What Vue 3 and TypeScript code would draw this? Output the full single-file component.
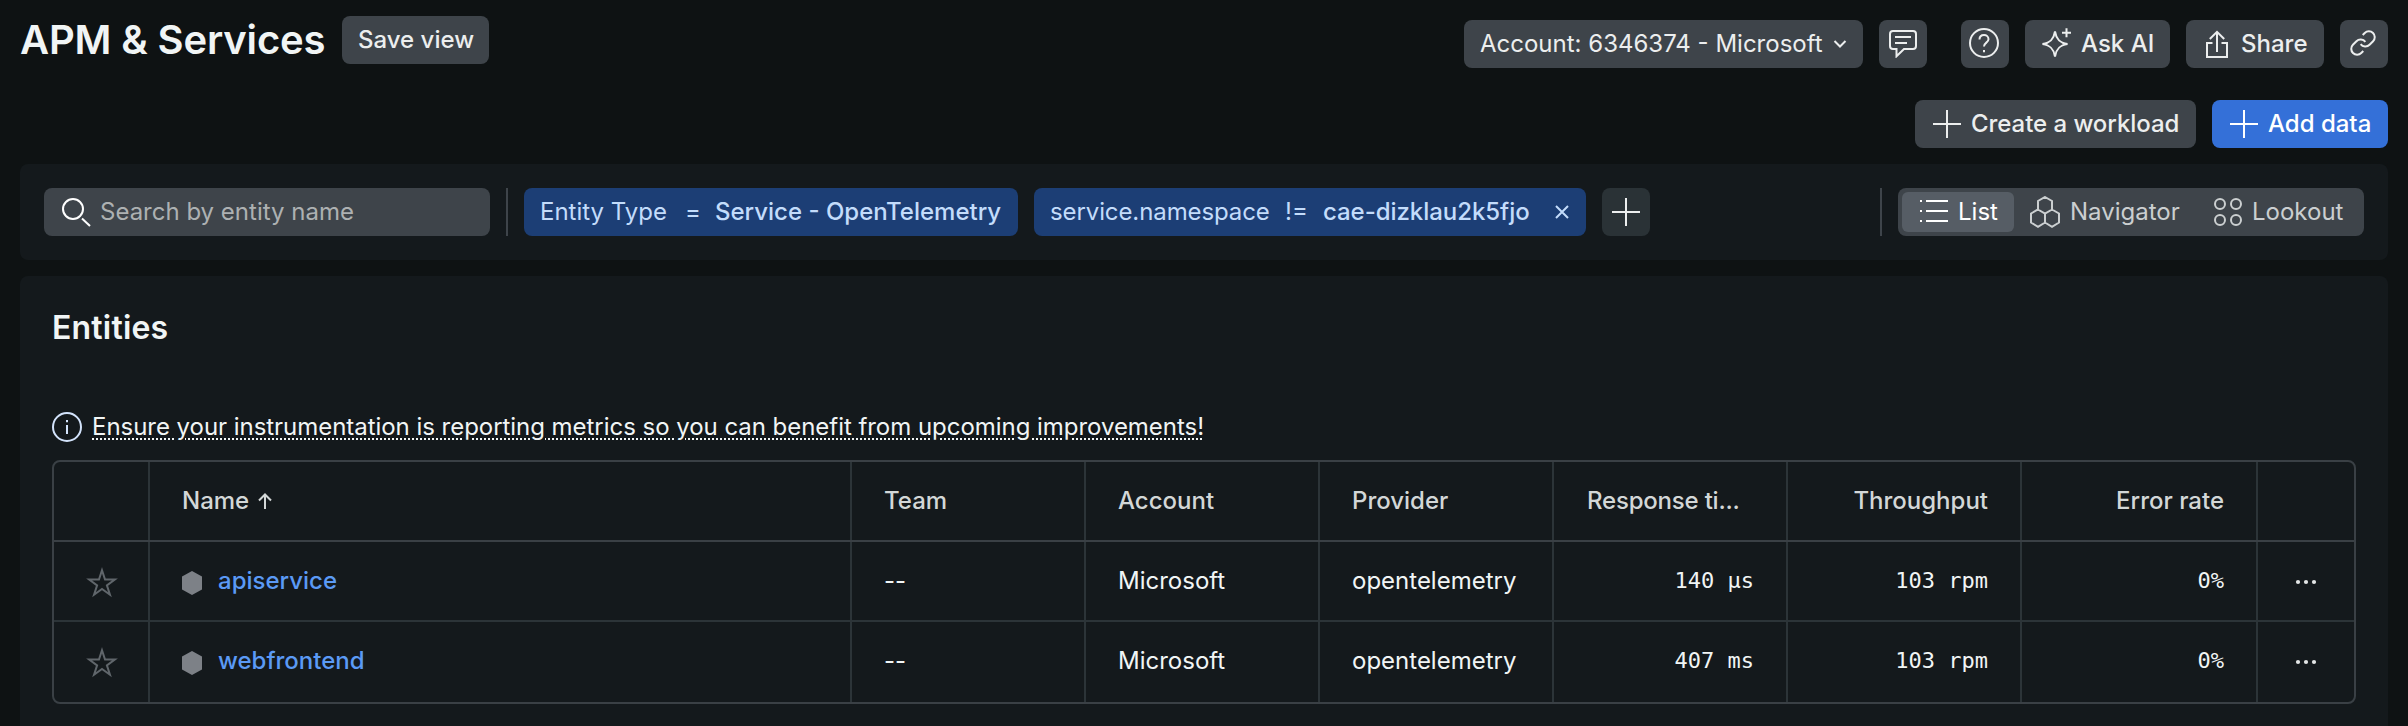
<script setup lang="ts">
interface Row {
  name: string
  team: string
  account: string
  provider: string
  response: string
  throughput: string
  errorRate: string
}

const rows: Row[] = [
  { name: 'apiservice', team: '--', account: 'Microsoft', provider: 'opentelemetry', response: '140 µs', throughput: '103 rpm', errorRate: '0%' },
  { name: 'webfrontend', team: '--', account: 'Microsoft', provider: 'opentelemetry', response: '407 ms', throughput: '103 rpm', errorRate: '0%' },
]
</script>

<template>
  <div class="page">
    <header class="top">
      <div class="heading">
        <h1>APM &amp; Services</h1>
        <button class="btn save">Save view</button>
      </div>
      <div class="actions">
        <button class="btn account">
          <span class="t-account">Account: 6346374 - Microsoft</span>
          <svg class="chev" width="14" height="10" viewBox="0 0 14 10"><path d="M1.5 2 7 7.5 12.5 2" /></svg>
        </button>
        <button class="btn square feedback">
          <svg width="28" height="28" viewBox="0 0 28 28"><path d="M7.5 19H4a3 3 0 0 1-3-3V4a3 3 0 0 1 3-3h20a3 3 0 0 1 3 3v12a3 3 0 0 1-3 3h-9l-7.5 7.3zM6 7h16M6 13h12" /></svg>
        </button>
        <button class="btn square help">
          <svg width="30" height="30" viewBox="0 0 30 30"><circle cx="15" cy="15" r="14" /><path d="M10.5 11.5C10.5 8.600 12.500 7 15 7s4.500 1.700 4.500 4.200c0 3.300-4.500 3.600-4.500 7.300M15 22v2.200" /></svg>
        </button>
        <button class="btn ask">
          <svg width="30" height="30" viewBox="0 0 30 30"><path d="M14 3.500c1.200 7.500 4.500 11.300 12.500 12.500-8 1.200-11.300 5-12.500 12.500C12.800 21 9.500 17.200 1.500 16 9.500 14.800 12.800 11 14 3.500z" /><path d="M25.500.3v9M21 4.700h9" /></svg>
          <span class="t-ask">Ask AI</span>
        </button>
        <button class="btn share">
          <svg width="22" height="28" viewBox="0 0 22 28"><path d="M6.500 13H1v14h20V13h-5.500M11 22V2M3.800 9 11 1.800 18.200 9" /></svg>
          <span class="t-share">Share</span>
        </button>
        <button class="btn square link">
          <svg width="26" height="26" viewBox="1 1 22 22"><path d="M10 13a5 5 0 0 0 7.540.54l3-3a5 5 0 0 0-7.070-7.070l-1.720 1.710M14 11a5 5 0 0 0-7.540-.54l-3 3a5 5 0 0 0 7.070 7.070l1.710-1.710" /></svg>
        </button>
      </div>
    </header>

    <div class="subactions">
      <button class="btn wide create">
        <svg width="28" height="28" viewBox="0 0 28 28"><path d="M14 0v28M0 14h28" /></svg>
        <span class="t-create">Create a workload</span>
      </button>
      <button class="btn wide primary">
        <svg width="28" height="28" viewBox="0 0 28 28"><path d="M14 0v28M0 14h28" /></svg>
        <span class="t-add">Add data</span>
      </button>
    </div>

    <section class="filters">
      <div class="search">
        <svg width="30" height="30" viewBox="0 0 30 30"><circle cx="12" cy="12" r="10" /><path d="M21 21.500l8 7.500" /></svg>
        <span>Search by entity name</span>
      </div>
      <i class="rule"></i>
      <div class="chip first"><span class="k">Entity Type</span><span class="op">=</span><b>Service - OpenTelemetry</b></div>
      <div class="chip second">
        <span class="k">service.namespace</span><span class="op">!=</span><b>cae-dizklau2k5fjo</b>
        <svg width="14" height="14" viewBox="0 0 14 14"><path d="M1 1l12 12M13 1 1 13" /></svg>
      </div>
      <button class="btn square plus"><svg width="28" height="28" viewBox="0 0 28 28"><path d="M14 0v28M0 14h28" /></svg></button>
      <i class="rule end"></i>
      <div class="modes">
        <div class="mode active">
          <svg width="28" height="22" viewBox="0 0 28 22"><path d="M0 1h2M6 1h22M0 11h2M6 11h22M0 21h2M6 21h22" /></svg>
          <span>List</span>
        </div>
        <div class="mode nav">
          <svg width="30" height="32" viewBox="0 0 30 32"><path d="M15 1l7 4v8.500l-7 4-7-4V5zM8 13.500l7 4v9l-7 4.300-7-4.300v-9zM22 13.500l7 4v9l-7 4.300-7-4.300" /></svg>
          <span>Navigator</span>
        </div>
        <div class="mode look">
          <svg width="28" height="28" viewBox="0 0 28 28"><circle cx="6" cy="6" r="5" /><circle cx="22" cy="6" r="5" /><circle cx="6" cy="22" r="5" /><circle cx="22" cy="22" r="5" /></svg>
          <span>Lookout</span>
        </div>
      </div>
    </section>

    <section class="entities">
      <h2>Entities</h2>
      <div class="notice">
        <svg width="30" height="30" viewBox="0 0 30 30"><circle cx="15" cy="15" r="14" /><path d="M15 13v9M15 8v2.200" /></svg>
        <span>Ensure your instrumentation is reporting metrics so you can benefit from upcoming improvements!</span>
      </div>
      <div class="table">
        <div class="row head">
          <div class="cell"></div>
          <div class="cell name-head">
            <span>Name</span>
            <svg width="14" height="16" viewBox="0 0 14 16"><path d="M7 16V1.500M1 7.500l6-6 6 6" /></svg>
          </div>
          <div class="cell">Team</div>
          <div class="cell">Account</div>
          <div class="cell">Provider</div>
          <div class="cell num"><span class="clip">Response ti...</span></div>
          <div class="cell num">Throughput</div>
          <div class="cell num">Error rate</div>
          <div class="cell"></div>
        </div>
        <div v-for="row in rows" :key="row.name" class="row">
          <div class="cell icon">
            <svg class="star" width="32" height="32" viewBox="0 0 32 32"><path d="M16 3.300 19.030 12.600H28.840L20.900 18.400 23.930 27.700 16 21.960 8.070 27.700 11.100 18.400 3.160 12.600H12.970z" /></svg>
          </div>
          <div class="cell">
            <svg class="hex" width="20" height="24" viewBox="0 0 20 24"><path d="M10 0l10 5.600v12.800L10 24 0 18.400V5.600z" /></svg>
            <a>{{ row.name }}</a>
          </div>
          <div class="cell">{{ row.team }}</div>
          <div class="cell">{{ row.account }}</div>
          <div class="cell">{{ row.provider }}</div>
          <div class="cell num mono">{{ row.response }}</div>
          <div class="cell num mono">{{ row.throughput }}</div>
          <div class="cell num mono">{{ row.errorRate }}</div>
          <div class="cell icon">
            <svg class="dots" width="22" height="6" viewBox="0 0 22 6"><circle cx="3" cy="3" r="2.100" /><circle cx="11" cy="3" r="2.100" /><circle cx="19" cy="3" r="2.100" /></svg>
          </div>
        </div>
      </div>
    </section>
  </div>
</template>

<style>
html,
body {
  margin: 0;
  background: #0e1213;
  overflow: hidden;
}
</style>

<style scoped>
.page {
  box-sizing: border-box;
  width: 2408px;
  height: 726px;
  padding: 16px 20px 0;
  overflow: hidden;
  background: #0e1213;
  color: #f1f5f5;
  font: 400 24px/30px Inter, "Liberation Sans", sans-serif;
  white-space: nowrap;
}
svg {
  display: block;
  flex: none;
  fill: none;
  stroke: currentColor;
  stroke-width: 2;
}
h1,
h2 {
  margin: 0;
  font-weight: 600;
}
h1 {
  width: 322px;
  font-size: 40px;
  line-height: 48px;
  letter-spacing: -0.15px;
}
.top {
  display: flex;
  justify-content: space-between;
}
.heading {
  display: flex;
}
.actions {
  display: flex;
  gap: 16px;
  padding-top: 4px;
}
.btn {
  display: flex;
  align-items: center;
  box-sizing: border-box;
  height: 48px;
  padding: 0 16px;
  border: 0;
  border-radius: 8px;
  background: #3e444a;
  color: #eceeee;
  font: 500 24px/30px Inter, "Liberation Sans", sans-serif;
  white-space: nowrap;
}
.save {
  width: 147px;
}
.account {
  width: 399px;
  font-weight: 400;
}
.chev {
  margin-left: 10px;
}
.square {
  width: 48px;
  padding: 0;
  justify-content: center;
}
.help {
  margin-left: 18px;
  padding: 0 2px 2px 0;
}
.ask {
  width: 145px;
  gap: 10px;
}
.ask svg {
  margin-top: -2px;
}
.share {
  width: 138px;
  padding-left: 20px;
  gap: 13px;
}
.link {
  padding: 0 2px 2px 0;
}
.link svg {
  stroke-width: 1.7;
}
.subactions {
  display: flex;
  justify-content: flex-end;
  gap: 16px;
  margin-top: 32px;
}
.wide {
  width: 281px;
  padding-left: 18px;
  gap: 10px;
}
.create {
  letter-spacing: -0.05px;
}
.primary {
  width: 176px;
  background: #3470d8;
  color: #fff;
}
.filters {
  display: flex;
  box-sizing: border-box;
  height: 96px;
  margin-top: 16px;
  padding: 24px;
  border-radius: 8px;
  background: #14191c;
}
.search {
  display: flex;
  align-items: center;
  box-sizing: border-box;
  width: 446px;
  height: 48px;
  padding-left: 17px;
  gap: 9px;
  border-radius: 8px;
  background: #3e444a;
  color: #fff;
}
.search span {
  color: #adb1b2;
}
.rule {
  width: 2px;
  height: 48px;
  margin: 0 16px;
  background: #3e444a;
}
.end {
  margin-left: auto;
}
.chip {
  display: flex;
  align-items: center;
  box-sizing: border-box;
  height: 48px;
  margin-right: 16px;
  padding-left: 16px;
  border-radius: 8px;
  background: #1c3e75;
  color: #c3dcfb;
}
.chip b {
  font-weight: 500;
}
.first {
  width: 494px;
}
.second {
  width: 552px;
}
.first .k {
  width: 145px;
}
.first .op {
  width: 30px;
}
.second .k {
  width: 235px;
  letter-spacing: -0.1px;
}
.second .op {
  width: 38px;
}
.second b {
  width: 232px;
  letter-spacing: -0.05px;
}
.plus {
  background: #2a3236;
}
.modes {
  display: flex;
  box-sizing: border-box;
  width: 466px;
  padding: 4px;
  border-radius: 8px;
  background: #3e444a;
  color: #cbcfd0;
}
.mode {
  display: flex;
  align-items: center;
  box-sizing: border-box;
  height: 40px;
  gap: 10px;
}
.active {
  width: 112px;
  padding-left: 18px;
  border-radius: 6px;
  background: #565d65;
  color: #fff;
}
.active svg {
  margin-top: -2px;
}
.nav {
  width: 184px;
  padding-left: 16px;
}
.look {
  padding-left: 16px;
}
.entities {
  box-sizing: border-box;
  height: 460px;
  margin-top: 16px;
  padding: 32px 32px 0;
  border-radius: 8px 8px 0 0;
  background: #14191c;
}
h2 {
  font-size: 32px;
  line-height: 40px;
  letter-spacing: 0.2px;
}
.notice {
  display: flex;
  align-items: center;
  height: 30px;
  margin-top: 64px;
  gap: 10px;
}
.notice svg {
  color: #d3e3fb;
}
.notice span {
  letter-spacing: -0.04px;
  text-decoration: underline dotted 2px;
  text-underline-offset: 3px;
}
.table {
  box-sizing: border-box;
  height: 244px;
  margin-top: 18px;
  border: 2px solid #3a4045;
  border-radius: 8px;
}
.row {
  display: grid;
  grid-template-columns: 96px 702px repeat(5, 234px) 236px 96px;
  box-sizing: border-box;
  height: 80px;
  border-bottom: 2px solid #2c3438;
}
.row:last-child .cell {
  height: 80px;
  padding-bottom: 2px;
}
.row:last-child {
  border-bottom: 0;
}
.row.head {
  border-bottom-color: #3a4045;
  color: #d3d7d7;
  font-weight: 500;
}
.cell {
  display: flex;
  align-items: center;
  box-sizing: border-box;
  padding: 0 32px;
  border-right: 2px solid #2c3438;
}
.cell:last-child {
  border-right: 0;
}
.name-head svg {
  margin-left: 9px;
}
.num {
  justify-content: flex-end;
}
.clip {
  width: 167px;
  letter-spacing: -0.2px;
}
.mono {
  font-family: "DejaVu Sans Mono", "Liberation Mono", monospace;
  font-size: 22px;
}
.icon {
  justify-content: center;
  padding: 0;
}
.star {
  margin: 4px 0 0 2px;
  color: #60666b;
}
.hex {
  margin: 4px 16px 0 0;
  fill: #7d8187;
  stroke: none;
}
.dots {
  margin-top: 2px;
  fill: #e3e6e6;
  stroke: none;
}
a {
  color: #5b9af5;
  font-weight: 500;
}
</style>
